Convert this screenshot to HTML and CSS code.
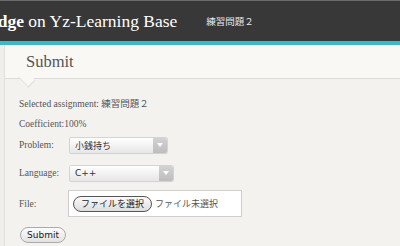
FILE: index.html
```html
<!DOCTYPE html>
<html lang="ja">
<head>
    <meta charset="utf-8">
    <title>Submit - Yz-Learning Base</title>
    <link rel="stylesheet" href="styles.css">
</head>
<body>
    <header class="topbar">
        <div class="brand"><b>Yz-Judge</b> on Yz-Learning Base</div>
        <div class="crumb">練習問題２</div>
    </header>
    <div class="page">
        <div class="side"></div>
        <main class="panel">
            <div class="panel-head">
                <h1>Submit</h1>
                <span class="notch"></span>
            </div>
            <form class="form">
                <p class="line">Selected assignment: 練習問題２</p>
                <p class="line">Coefficient:100%</p>
                <div class="row first">
                    <label>Problem:</label>
                    <div class="select w1"><span>小銭持ち</span><i class="arrow"></i></div>
                </div>
                <div class="row">
                    <label>Language:</label>
                    <div class="select w2"><span>C++</span><i class="arrow"></i></div>
                </div>
                <div class="row file-row">
                    <label>File:</label>
                    <div class="file">
                        <span class="pill">ファイルを選択</span>
                        <span class="none">ファイル未選択</span>
                    </div>
                </div>
                <button type="button" class="submit">Submit</button>
            </form>
        </main>
    </div>
</body>
</html>
```

FILE: styles.css
```css
* {
    margin: 0;
    padding: 0;
    box-sizing: border-box;
}
body {
    background: #f3f2ef;
    font-family: "Liberation Serif", "Noto Sans CJK JP", serif;
    color: #555;
    width: 400px;
    height: 246px;
    overflow: hidden;
}
.topbar {
    height: 45px;
    background: #383838;
    border-top: 1px solid #6a6a6a;
    border-bottom: 4px solid #35bcc8;
    box-shadow: 0 1px 0 #9fdde2;
    display: flex;
    align-items: center;
    color: #fff;
    white-space: nowrap;
}
.brand {
    font-size: 17.5px;
    margin-left: -47px;
}
.crumb {
    font-size: 9.5px;
    margin-left: 29px;
    color: #e8e8e8;
}
.page {
    display: flex;
    height: 201px;
}
.side {
    width: 5px;
    background: #efeeea;
    border-right: 1px solid #e2e0db;
}
.panel {
    flex: 1;
}
.panel-head {
    height: 34px;
    background: #f9f8f4;
    border-bottom: 1px solid #dddbd5;
    position: relative;
    padding: 7px 0 0 21px;
}
.panel-head h1 {
    font-size: 16.5px;
    font-weight: normal;
    color: #555;
}
.notch {
    position: absolute;
    left: 15px;
    bottom: -8px;
    width: 14px;
    height: 14px;
    background: #f9f8f4;
    border-right: 1px solid #dddbd5;
    border-bottom: 1px solid #dddbd5;
    transform: rotate(45deg) scaleY(0.7);
}
.form {
    padding: 15px 0 0 14px;
    font-size: 9.5px;
}
.line {
    height: 20px;
    line-height: 20px;
}
.row {
    display: flex;
    align-items: center;
    margin-top: 8px;
    height: 20px;
}
.row.first {
    margin-top: 1px;
}
.row label {
    width: 51px;
}
.select {
    height: 15px;
    border-radius: 2px;
    background: linear-gradient(#ffffff, #e6e6e6);
    box-shadow: 0 0 0 1px #d4d4d4, 0 1px 1px rgba(0, 0, 0, 0.12);
    display: flex;
    align-items: center;
    font-family: "DejaVu Sans", "Noto Sans CJK JP", sans-serif;
    font-size: 9px;
    color: #333;
}
.select span {
    flex: 1;
    padding-left: 5px;
}
.w1 {
    width: 97px;
}
.w2 {
    width: 103px;
}
.arrow {
    width: 14px;
    height: 100%;
    background: linear-gradient(#d2d2d2, #bdbdbd);
    border-radius: 0 2px 2px 0;
    display: flex;
    align-items: center;
    justify-content: center;
}
.arrow::after {
    content: '';
    border-left: 3px solid transparent;
    border-right: 3px solid transparent;
    border-top: 4px solid #fff;
}
.file-row {
    height: 27px;
    margin-top: 7px;
}
.file-row label {
    width: 49px;
}
.file {
    width: 174px;
    height: 27px;
    background: #fff;
    border: 1px solid #cfcfcf;
    display: flex;
    align-items: center;
    padding-left: 4px;
    font-family: "Noto Sans CJK JP", sans-serif;
    font-size: 9px;
    color: #555;
}
.pill {
    border: 1px solid #555;
    border-radius: 8px;
    background: linear-gradient(#fafafa, #dedede);
    color: #222;
    padding: 0 7px;
    height: 16px;
    line-height: 14px;
    margin-right: 3px;
}
.submit {
    margin: 10px 0 0 1px;
    height: 16px;
    width: 46px;
    border: 1px solid #aaa;
    border-radius: 8px;
    background: linear-gradient(#fdfdfd, #e2e2e2);
    font-family: "DejaVu Sans", sans-serif;
    font-size: 9px;
    color: #222;
}
```
